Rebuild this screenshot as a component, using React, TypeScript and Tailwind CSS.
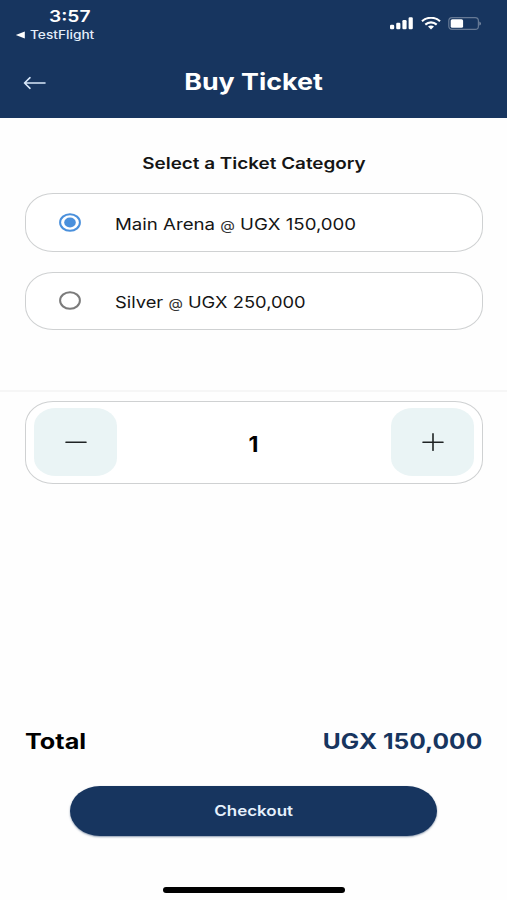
import { useState } from "react";

const TICKETS = [
  { name: "Main Arena", price: 150000, stretch: "scale-x-[1.165]" },
  { name: "Silver", price: 250000, stretch: "scale-x-[1.145]" },
];

const formatPrice = (value: number) => value.toLocaleString("en-US");

function StatusBar() {
  return (
    <div className="flex justify-between h-12 pt-2 pl-[15px] pr-[26px]">
      <div>
        <div className="ml-[34px] h-[17px] text-[16px] leading-[17px] font-semibold">
          <span className="inline-block origin-left scale-x-[1.2]">3:57</span>
        </div>
        <div className="flex items-center mt-[2px] h-4 text-[#e3edfa]">
          <svg className="w-[10px] h-[8px]" viewBox="0 0 10 8" fill="#fff">
            <path d="M0.8 4 9.8 0.4v7.2z" />
          </svg>
          <span className="ml-[5px] inline-block origin-left scale-x-[1.19] text-[11.5px] leading-4 font-medium">
            TestFlight
          </span>
        </div>
      </div>
      <div className="flex items-start pt-[9px]">
        <svg className="w-[23px] h-[13px]" viewBox="0 0 23 13" fill="#fff">
          <rect x="0" y="7.8" width="4.2" height="4.4" rx="1.2" />
          <rect x="6.2" y="5.7" width="4.2" height="6.5" rx="1.2" />
          <rect x="12.4" y="3" width="4.2" height="9.2" rx="1.2" />
          <rect x="18.6" y="0.3" width="4.2" height="11.9" rx="1.2" />
        </svg>
        <svg className="ml-2 w-[20px] h-[13px]" viewBox="0 0 20 13" fill="none" stroke="#fff" strokeWidth="2.1">
          <path d="M1 4.3C6-0.4 14-0.4 19 4.3" />
          <path d="M4.3 7.6c3.3-3 8.1-3 11.4 0" />
          <path d="M7 9.6c1.8-1.4 4.2-1.4 6 0L10 12.4z" fill="#fff" stroke="none" />
        </svg>
        <svg className="ml-[7px] w-[33px] h-[13px]" viewBox="0 0 33 13">
          <rect x="0.8" y="0.6" width="29.6" height="11.8" rx="3.2" fill="none" stroke="#fff" strokeOpacity="0.34" strokeWidth="1.2" />
          <rect x="2.7" y="2.2" width="12.4" height="8.6" rx="1.6" fill="#fff" />
          <path d="M31.4 4.4c2 .8 2 3.4 0 4.2z" fill="#fff" fillOpacity="0.45" />
        </svg>
      </div>
    </div>
  );
}

function Radio({ checked }: { checked: boolean }) {
  const color = checked ? "#4a90dc" : "#7b7b7b";
  return (
    <svg className="w-[22px] h-[19px] shrink-0" viewBox="0 0 22 19">
      <ellipse cx="11" cy="9.5" rx="9.9" ry="8.3" fill="none" stroke={color} strokeWidth="2" />
      {checked && <ellipse cx="11" cy="9.5" rx="5.8" ry="4.9" fill={color} />}
    </svg>
  );
}

export default function App() {
  const [selected, setSelected] = useState(0);
  const [count, setCount] = useState(1);

  return (
    <div className="flex flex-col w-full h-[900px] overflow-hidden bg-[#fefefe] text-[#151515] font-[Inter,sans-serif]">
      {/* Header */}
      <header className="h-[118px] bg-[#17355f] text-white">
        <StatusBar />
        <div className="grid grid-cols-[1fr_auto_1fr] items-center h-[70px] px-[23px]">
          <button aria-label="Back">
            <svg className="w-[23px] h-[14px]" viewBox="0 0 23 14" fill="none" stroke="#d9e8fa" strokeWidth="1.6" strokeLinecap="round" strokeLinejoin="round">
              <path d="M22 7H1.5M7 1.7 1.5 7 7 12.3" />
            </svg>
          </button>
          <h1 className="mb-[2px] text-[23px] leading-8 font-bold scale-x-[1.165]">Buy Ticket</h1>
        </div>
      </header>

      {/* Ticket categories */}
      <section className="flex flex-col h-[274px] pl-[25px] pr-6 pt-[34px] border-b-2 border-[#f6f6f6]">
        <h2 className="text-center text-[16px] leading-[22px] font-semibold scale-x-[1.18]">
          Select a Ticket Category
        </h2>
        <div className="flex flex-col gap-5 mt-[19px]">
          {TICKETS.map((t, i) => (
            <button
              key={t.name}
              onClick={() => setSelected(i)}
              className="flex items-center h-[58.5px] pl-[33px] border border-[#cfd1d2] rounded-[28px/24px] bg-white"
            >
              <Radio checked={selected === i} />
              <span className={`ml-[34px] mt-1 origin-left text-[16px] leading-6 whitespace-nowrap ${t.stretch}`}>
                {t.name} <span className="text-[13px] text-[#333]">@</span> UGX {formatPrice(t.price)}
              </span>
            </button>
          ))}
        </div>
      </section>

      {/* Quantity */}
      <div className="flex justify-between items-center h-[83px] ml-[25px] mr-6 mt-[9px] px-2 pb-px border border-[#cfd1d2] rounded-[28px/24px] bg-white">
        <button
          aria-label="Decrease"
          onClick={() => setCount(Math.max(1, count - 1))}
          className="flex justify-center items-center w-[83px] h-[68px] rounded-[22px/18px] bg-[#eaf4f5]"
        >
          <svg className="w-[22px] h-[18px]" viewBox="0 0 22 18" stroke="#1f2324" strokeWidth="1.6" strokeLinecap="round">
            <path d="M1 9.2h20" />
          </svg>
        </button>
        <span className="mt-[5px] text-[21px] leading-7 font-bold text-black scale-x-[1.1]">{count}</span>
        <button
          aria-label="Increase"
          onClick={() => setCount(count + 1)}
          className="flex justify-center items-center w-[83px] h-[68px] rounded-[22px/18px] bg-[#eaf4f5]"
        >
          <svg className="w-[22px] h-[18px]" viewBox="0 0 22 18" stroke="#1f2324" strokeWidth="1.6" strokeLinecap="round">
            <path d="M1 9.2h20M11 0.9v16.4" />
          </svg>
        </button>
      </div>

      {/* Total + checkout */}
      <footer className="flex flex-col mt-auto pb-[7px]">
        <div className="flex justify-between mx-[25px] text-[21px] leading-7 font-bold">
          <span className="origin-left scale-x-[1.2] text-black">Total</span>
          <span className="origin-right scale-x-[1.17] text-[#17355f]">UGX {formatPrice(TICKETS[selected].price * count)}</span>
        </div>
        <button className="self-center w-[367px] h-[50px] mt-[30px] rounded-[30px/25px] bg-[#17355f] shadow-[0_1px_2px_#17355f80] text-[#e6f1fd] text-[14.5px] font-semibold">
          <span className="inline-block scale-x-[1.17]">Checkout</span>
        </button>
        <div className="self-center w-[182px] h-[6px] mt-[51px] rounded-full bg-black" />
      </footer>
    </div>
  );
}
